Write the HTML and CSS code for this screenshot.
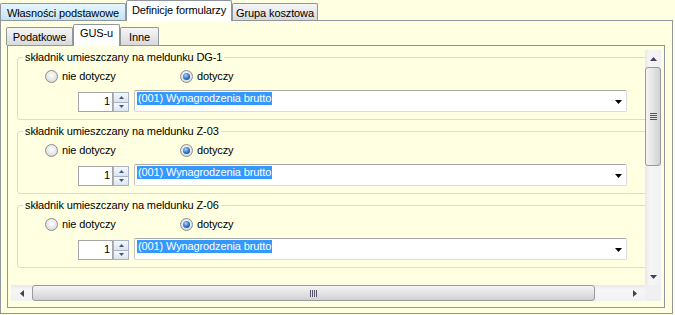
FILE: index.html
```html
<!DOCTYPE html>
<html lang="pl">
<head>
<meta charset="utf-8">
<title>Definicje formularzy</title>
<link rel="stylesheet" href="styles.css">
</head>
<body>
<div class="window">
  <div class="tabs outer-tabs">
    <div class="tab tab-hot t-props">Własności podstawowe</div>
    <div class="tab tab-active t-defs">Definicje formularzy</div>
    <div class="tab t-cost">Grupa kosztowa</div>
  </div>
  <div class="panel outer-panel">
    <div class="tabs inner-tabs">
      <div class="tab tab-sm t-tax">Podatkowe</div>
      <div class="tab tab-sm tab-active t-gus">GUS-u</div>
      <div class="tab tab-sm t-other">Inne</div>
    </div>
    <div class="panel inner-panel">
      <div class="scrollview">
        <div class="viewport">
          <div class="content">
            <fieldset class="group">
              <legend>składnik umieszczany na meldunku DG-1</legend>
              <div class="radio-row">
                <label class="radio-item first"><span class="radio"></span>nie dotyczy</label>
                <label class="radio-item"><span class="radio checked"></span>dotyczy</label>
              </div>
              <div class="controls">
                <div class="spin">
                  <div class="spin-value">1</div>
                  <div class="spin-buttons">
                    <div class="spin-btn"><svg width="5" height="3" viewBox="0 0 5 3"><path d="M0 3h5L2.5 0z"/></svg></div>
                    <div class="spin-btn"><svg width="5" height="3" viewBox="0 0 5 3"><path d="M0 0h5L2.5 3z"/></svg></div>
                  </div>
                </div>
                <div class="combo">
                  <span class="combo-text">(001) Wynagrodzenia brutto</span>
                  <svg class="combo-arrow" width="7" height="4" viewBox="0 0 7 4"><path d="M0 0h7L3.5 4z"/></svg>
                </div>
              </div>
            </fieldset>
            <fieldset class="group">
              <legend>składnik umieszczany na meldunku Z-03</legend>
              <div class="radio-row">
                <label class="radio-item first"><span class="radio"></span>nie dotyczy</label>
                <label class="radio-item"><span class="radio checked"></span>dotyczy</label>
              </div>
              <div class="controls">
                <div class="spin">
                  <div class="spin-value">1</div>
                  <div class="spin-buttons">
                    <div class="spin-btn"><svg width="5" height="3" viewBox="0 0 5 3"><path d="M0 3h5L2.5 0z"/></svg></div>
                    <div class="spin-btn"><svg width="5" height="3" viewBox="0 0 5 3"><path d="M0 0h5L2.5 3z"/></svg></div>
                  </div>
                </div>
                <div class="combo">
                  <span class="combo-text">(001) Wynagrodzenia brutto</span>
                  <svg class="combo-arrow" width="7" height="4" viewBox="0 0 7 4"><path d="M0 0h7L3.5 4z"/></svg>
                </div>
              </div>
            </fieldset>
            <fieldset class="group">
              <legend>składnik umieszczany na meldunku Z-06</legend>
              <div class="radio-row">
                <label class="radio-item first"><span class="radio"></span>nie dotyczy</label>
                <label class="radio-item"><span class="radio checked"></span>dotyczy</label>
              </div>
              <div class="controls">
                <div class="spin">
                  <div class="spin-value">1</div>
                  <div class="spin-buttons">
                    <div class="spin-btn"><svg width="5" height="3" viewBox="0 0 5 3"><path d="M0 3h5L2.5 0z"/></svg></div>
                    <div class="spin-btn"><svg width="5" height="3" viewBox="0 0 5 3"><path d="M0 0h5L2.5 3z"/></svg></div>
                  </div>
                </div>
                <div class="combo">
                  <span class="combo-text">(001) Wynagrodzenia brutto</span>
                  <svg class="combo-arrow" width="7" height="4" viewBox="0 0 7 4"><path d="M0 0h7L3.5 4z"/></svg>
                </div>
              </div>
            </fieldset>
          </div>
        </div>
        <div class="vscroll">
          <div class="sb-btn"><svg width="7" height="4" viewBox="0 0 7 4"><path d="M0 4h7L3.5 0z"/></svg></div>
          <div class="vthumb"><span class="grip-v"></span></div>
          <div class="sb-track"></div>
          <div class="sb-btn"><svg width="7" height="4" viewBox="0 0 7 4"><path d="M0 0h7L3.5 4z"/></svg></div>
        </div>
        <div class="hscroll">
          <div class="sb-btn hbtn"><svg width="4" height="7" viewBox="0 0 4 7"><path d="M4 0v7L0 3.5z"/></svg></div>
          <div class="hthumb"><span class="grip-h"></span></div>
          <div class="sb-track"></div>
          <div class="sb-btn hbtn"><svg width="4" height="7" viewBox="0 0 4 7"><path d="M0 0v7L4 3.5z"/></svg></div>
        </div>
        <div class="corner"></div>
      </div>
    </div>
  </div>
</div>
</body>
</html>
```
FILE: styles.css
```css
* { box-sizing: border-box; }
body {
  margin: 0;
  background: #ffffe1;
  font-family: "Liberation Sans", Arial, sans-serif;
  font-size: 11px;
  letter-spacing: -0.12px;
  color: #000;
}
.window { width: 675px; height: 315px; }

.tabs { display: flex; align-items: flex-end; }
.outer-tabs { height: 20px; }
.inner-tabs { height: 24px; padding-left: 5px; }

.tab {
  height: 17px;
  padding-top: 2px;
  line-height: 14px;
  border: 1px solid #8f969c;
  border-bottom: none;
  border-radius: 2px 2px 0 0;
  background: linear-gradient(#f6f6f6, #e8e8e8 50%, #d9d9d9);
  text-align: center;
  white-space: nowrap;
}
.tab-hot { background: linear-gradient(#e6f5fd, #d5eefa 50%, #bfe3f5); }
.tab-active {
  height: 21px;
  padding-top: 0;
  line-height: 19px;
  margin-bottom: -1px;
  background: #fff;
  position: relative;
  z-index: 1;
}
.tab-sm { height: 18px; padding-top: 1px; line-height: 16px; }
.tab-sm.tab-active { height: 22px; padding-top: 0; line-height: 17px; }

.t-props { width: 126px; }
.t-defs { width: 106px; }
.t-cost { width: 86px; }
.t-tax { width: 67px; }
.t-gus { width: 47px; }
.t-other { width: 39px; }

.panel { border: 1px solid #8f969c; }
.outer-panel {
  width: 673px;
  height: 294px;
  padding: 0 7px 5px 0;
}
.inner-panel {
  width: 658px;
  height: 263px;
  margin-left: 6px;
  padding: 4px 3px 6px 3px;
}

.scrollview {
  display: grid;
  grid-template-columns: 634px 16px;
  grid-template-rows: 235px 16px;
  width: 650px;
  height: 251px;
}
.viewport { overflow: hidden; }
.content { padding: 1px 0 0 6px; }

.group {
  width: 670px;
  min-width: 0;
  margin: 0 0 5px;
  padding: 0 0 7px 6px;
  border: 1px solid #d3dce3;
  border-radius: 3px;
}
.group legend {
  padding: 0 2px;
  margin-left: -1px;
  line-height: 13px;
}

.radio-row {
  display: flex;
  align-items: center;
  height: 14px;
  margin-top: 5px;
  padding-left: 21px;
}
.radio-item { display: flex; align-items: center; gap: 4px; }
.radio-item.first { width: 135px; }
.radio {
  width: 13px;
  height: 13px;
  border-radius: 50%;
  border: 1px solid #8d8d8d;
  background: radial-gradient(circle at 50% 40%, #ffffff, #e6e6e6 55%, #c8c8c8);
  display: flex;
  align-items: center;
  justify-content: center;
}
.radio.checked::after {
  content: "";
  width: 7px;
  height: 7px;
  border-radius: 50%;
  background: radial-gradient(circle at 40% 35%, #a9d6fb, #2b6fc6 55%, #0d3c86);
}

.controls {
  display: flex;
  align-items: flex-end;
  margin-top: 7px;
  padding-left: 54px;
}
.spin { display: flex; height: 20px; }
.spin-value {
  width: 35px;
  border: 1px solid #a5a5a5;
  background: #fff;
  text-align: right;
  padding-right: 2px;
  line-height: 17px;
}
.spin-buttons { width: 16px; display: flex; flex-direction: column; }
.spin-btn {
  flex: 1;
  border: 1px solid #a7b3c2;
  background: linear-gradient(#f4f8fc, #dbe4ee);
  display: flex;
  align-items: center;
  justify-content: center;
}
.spin-btn + .spin-btn { border-top: none; }
.spin-btn svg { fill: #3c5a7c; }

.combo {
  width: 493px;
  height: 22px;
  margin-left: 5px;
  border: 1px solid;
  border-color: #a8a8a8 #dcdcdc #dcdcdc #c4c4c4;
  border-radius: 2px;
  background: #fff;
  display: flex;
  justify-content: space-between;
  padding: 1px 4px 0 2px;
}
.combo-text {
  align-self: flex-start;
  background: #3399ff;
  color: #fff;
  line-height: 13px;
  padding: 0 1px;
}
.combo-arrow { align-self: center; fill: #000; }

.vscroll {
  display: flex;
  flex-direction: column;
  background: linear-gradient(90deg, #e8e8e8, #f6f6f6 30%, #f1f1f1);
}
.hscroll {
  display: flex;
  background: linear-gradient(#e8e8e8, #f6f6f6 30%, #f1f1f1);
}
.sb-btn {
  height: 17px;
  display: flex;
  align-items: center;
  justify-content: center;
  flex: none;
}
.sb-btn svg { fill: #4a3d5c; }
.hbtn { width: 21px; height: 16px; }
.sb-track { flex: 1; }
.vthumb {
  height: 99px;
  flex: none;
  border: 1px solid #999;
  border-radius: 3px;
  background: linear-gradient(90deg, #f4f4f4, #e4e4e4 50%, #d0d0d0);
  display: flex;
  align-items: center;
  justify-content: center;
}
.grip-v {
  width: 7px;
  height: 7px;
  background: repeating-linear-gradient(#55516a 0 1px, #e6e6e6 1px 2px);
}
.hthumb {
  width: 563px;
  flex: none;
  border: 1px solid #999;
  border-radius: 3px;
  background: linear-gradient(#f4f4f4, #e4e4e4 50%, #d0d0d0);
  display: flex;
  align-items: center;
  justify-content: center;
}
.grip-h {
  width: 7px;
  height: 7px;
  background: repeating-linear-gradient(90deg, #55516a 0 1px, #e6e6e6 1px 2px);
}
.corner { background: #f0f0f0; }
```
